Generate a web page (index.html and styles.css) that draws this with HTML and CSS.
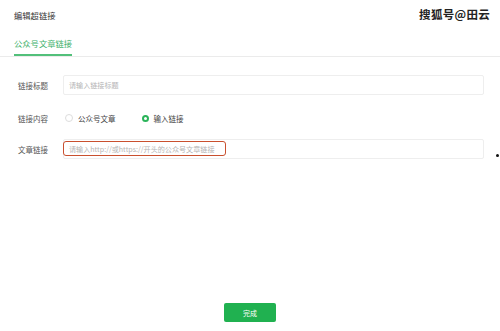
FILE: index.html
```html
<!DOCTYPE html>
<html>
<head>
  <meta charset="utf-8">
  <title>编辑超链接</title>
  <link rel="stylesheet" href="styles.css">
</head>
<body>

<div class="dialog">
  <div class="head">
    <div class="title">编辑超链接</div>
    <div class="mark">搜狐号@田云</div>
  </div>

  <div class="tabs">
    <div class="tab active">公众号文章链接</div>
  </div>

  <div class="form">
    <div class="row">
      <div class="label">链接标题</div>
      <div class="input">请输入链接标题</div>
    </div>

    <div class="row radios">
      <div class="label">链接内容</div>
      <div class="radio"><span class="dot"></span>公众号文章</div>
      <div class="radio checked"><span class="dot"></span>输入链接</div>
    </div>

    <div class="row">
      <div class="label">文章链接</div>
      <div class="input">
        请输入http://或https://开头的公众号文章链接
        <span class="hilite"></span>
      </div>
      <span class="speck"></span>
    </div>
  </div>

  <div class="foot">
    <button class="done">完成</button>
  </div>
</div>

</body>
</html>
```

FILE: styles.css
```css
body { margin: 0; background: #fff; font-family: "Noto Sans CJK SC", "Noto Sans", sans-serif; color: #333; }
.dialog { width: 500px; height: 331px; display: flex; flex-direction: column; }
.head { display: flex; justify-content: space-between; align-items: center; height: 26px; padding: 2px 10px 0 14px; }
.title { font-size: 8.3px; color: #333; }
.mark { font-size: 11.5px; font-weight: bold; color: #222; text-shadow: 0 0 2px #fff, 0 0 1px #fff; letter-spacing: 0.3px; margin-top: -2px; }
.tabs { display: flex; padding: 0 14px; border-bottom: 1px solid #ebebeb; margin-top: 6px; }
.tab { font-size: 8.3px; padding: 3px 0 5px; border-bottom: 2px solid #52c07a; color: #3cb06a; }
.form { padding: 18px 16px 0 18px; display: flex; flex-direction: column; }
.row { display: flex; align-items: center; position: relative; }
.row.radios { height: 10px; margin: 18px 0 16px; }
.label { width: 45px; font-size: 7.5px; color: #555; flex-shrink: 0; }
.input { position: relative; flex: 1; height: 20px; box-sizing: border-box; border: 1px solid #eee; border-radius: 2px; font-size: 7.1px; color: #b5b5b5; display: flex; align-items: center; padding-left: 5px; }
.radio { display: flex; align-items: center; font-size: 7.5px; color: #444; margin-left: 2px; margin-right: 24px; }
.dot { width: 6px; height: 6px; border: 1px solid #ddd; border-radius: 50%; margin-right: 5px; box-sizing: content-box; }
.checked .dot { width: 3px; height: 3px; border: 2.5px solid #2bb45a; }
.hilite { position: absolute; left: -1px; top: 1px; width: 161px; height: 13px; border: 1.5px solid #c9502f; border-radius: 3px; }
.speck { position: absolute; right: -15px; top: 15px; width: 3px; height: 3px; background: #111; border-radius: 50%; }
.foot { margin-top: auto; display: flex; justify-content: center; padding-bottom: 9px; }
.done { width: 52px; height: 19px; border: none; border-radius: 2px; background: #20b150; color: #fff; font-family: inherit; font-size: 7px; padding: 0; }
```
